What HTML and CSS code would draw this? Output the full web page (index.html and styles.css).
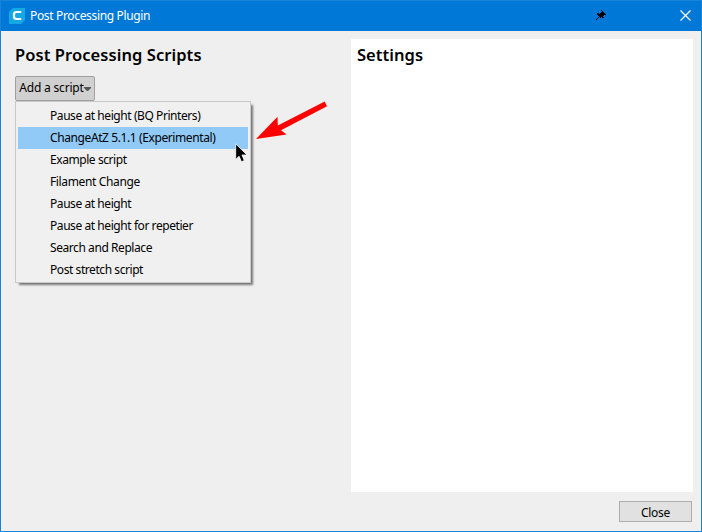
FILE: index.html
```html
<!DOCTYPE html>
<html lang="en">
<head>
<meta charset="utf-8">
<title>Post Processing Plugin</title>
<link rel="stylesheet" href="styles.css">
</head>
<body>
<div class="window">
  <header class="titlebar">
    <svg class="logo" width="16" height="16" viewBox="0 0 16 16"><path fill="#14a9e2" d="M4 0H16V12L12 16H0V4Z"/><path fill="none" stroke="#fff" stroke-width="2.2" d="M12.3 4H7.5Q5 4 5 6.5V8.5Q5 11 7.5 11H12.3"/></svg>
    <span class="title">Post Processing Plugin</span>
    <svg class="pin" width="11" height="11" viewBox="0 0 11 11" shape-rendering="crispEdges"><path d="M5 0H6V1H7V2H8V3H9V4H10V5H8V6H7V7H8V8H6V7H5V8H4V7H3V8H2V9H1V10H0V9H1V8H2V7H3V6H2V5H1V3H3V4H4V3H5V2H6V1H5Z"/></svg>
    <svg class="close-icon" width="11" height="11" viewBox="0 0 11 11"><path fill="none" stroke="#fff" stroke-width="1.2" d="M.5.5L10.5 10.5M10.5.5L.5 10.5"/></svg>
  </header>
  <main class="content">
    <section class="scripts">
      <h1 class="heading">Post Processing Scripts</h1>
      <div class="dropdown">
        <button class="add"><span class="add-label">Add a script</span><svg class="caret" width="7" height="4" viewBox="0 0 7 4"><path fill="#555" d="M0 0H7V1L4 4H3L0 1Z"/></svg></button>
        <ul class="menu">
          <li class="item">Pause at height (BQ Printers)</li>
          <li class="item selected">ChangeAtZ 5.1.1 (Experimental)</li>
          <li class="item">Example script</li>
          <li class="item wide">Filament Change</li>
          <li class="item">Pause at height</li>
          <li class="item">Pause at height for repetier</li>
          <li class="item">Search and Replace</li>
          <li class="item">Post stretch script</li>
        </ul>
      </div>
    </section>
    <section class="settings"><h2 class="heading settings-heading">Settings</h2></section>
  </main>
  <footer class="footer"><button class="close">Close</button></footer>
  <svg class="arrow" width="74" height="42" viewBox="0 0 74 42"><path fill="#f00" d="M1 38.9L22.5 16.8L22.8 25.5L69.7 1.5L72 6.2L26 30.2L31.6 34.5Z"/></svg>
  <svg class="cursor" width="13" height="20" viewBox="0 0 13 20"><path stroke="#fff" stroke-width=".8" d="M.7.8V16.5L4 13.2L6.5 18.8L9.3 17.5L7 12H12Z"/></svg>
</div>
</body>
</html>
```
FILE: styles.css
```css
* { box-sizing: border-box; }
body { margin: 0; font: 12px "Noto Sans", "Open Sans", sans-serif; color: #000; }
button { font: inherit; color: inherit; }
.window { position: relative; width: 702px; height: 532px; display: flex; flex-direction: column; background: #efefef; border: 1px solid #1883d7; }
.titlebar { height: 30px; flex: none; background: #0078d7; color: #fff; display: flex; align-items: center; padding: 0 10px 0 8px; }
.logo { flex: none; margin-top: -1px; }
.title { width: 130px; margin-left: 5px; line-height: 28px; letter-spacing: -.34px; white-space: nowrap; }
.pin { margin: -1px 0 0 436px; }
.close-icon { margin: -2px 0 0 auto; }
.content { display: flex; flex: 1; padding: 8px 8px 0 14px; }
.scripts { width: 336px; }
.settings { width: 342px; height: 453px; background: #fff; padding-left: 6px; }
.heading { margin: 0; padding-top: 4px; font-size: 16.5px; line-height: 24px; font-weight: 600; letter-spacing: .07px; white-space: nowrap; }
.settings-heading { letter-spacing: .05px; }
.dropdown { position: relative; margin-top: 9px; }
.add { display: flex; align-items: center; width: 80px; height: 25px; padding: 0 0 0 3px; background: #d0d0d0; border: 1px solid #a0a0a0; border-radius: 2px; white-space: nowrap; }
.add-label { width: 65px; line-height: 20px; margin-top: -2px; letter-spacing: -.2px; }
.caret { flex: none; margin-top: 1px; }
.menu { position: absolute; top: 25px; left: 0; width: 236px; height: 182px; margin: 0; padding: 3px 2px; list-style: none; background: #f0f0f0; border: 1px solid #c8c8c8; box-shadow: 3px 3px 2px -1px #777; }
.item { height: 22px; padding-left: 32px; line-height: 22px; white-space: nowrap; letter-spacing: -.43px; }
.wide { letter-spacing: -.36px; }
.selected { background: #91c9f7; letter-spacing: -.4px; }
.footer { height: 30px; flex: none; display: flex; justify-content: flex-end; padding: 0 9px 0 0; }
.close { width: 73px; height: 21px; padding: 2px 0 0; line-height: 17px; letter-spacing: -.3px; background: #e1e1e1; border: 1px solid #adadad; }
.arrow { position: absolute; left: 254px; top: 99px; }
.cursor { position: absolute; left: 234px; top: 142px; }
```
